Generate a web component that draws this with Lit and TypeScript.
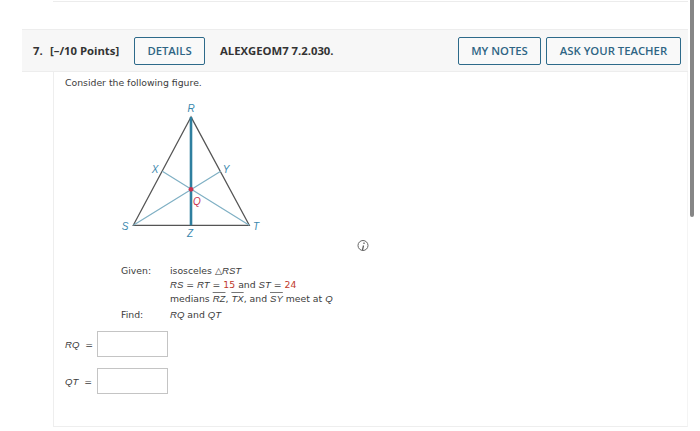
import { LitElement, html, css } from "lit";
import { customElement } from "lit/decorators.js";

@customElement("app-root")
export class AppRoot extends LitElement {
  static styles = css`
    :host {
      display: block;
      position: relative;
      width: 700px;
      height: 431px;
      overflow: hidden;
      background: #fff;
      font-family: "DejaVu Sans", "Open Sans", sans-serif;
      color: #3c3c3c;
    }
    .top-card {
      height: 1px;
      margin: 0 12px 0 53px;
      border-bottom: 1px solid #ececec;
    }
    .head {
      margin: 27px 12px 0 22px;
      height: 41px;
      box-sizing: content-box;
      background: #f7f7f7;
      border-top: 1px solid #ededed;
      border-bottom: 1px solid #ededed;
      display: flex;
      align-items: center;
      padding-left: 11px;
      padding-right: 7px;
      font-family: "Open Sans", sans-serif;
      font-size: 11.3px;
      font-weight: 700;
      color: #333;
    }
    .num { width: 17px; }
    .pts { width: 84px; }
    .ref { margin-left: 15px; flex: 1; }
    .btn {
      box-sizing: border-box;
      height: 28px;
      display: flex;
      align-items: center;
      justify-content: center;
      border: 1.5px solid #2d6a8a;
      border-radius: 2px;
      color: #2f6584;
      font-size: 11.3px;
      font-weight: 600;
      background: #f9f9f9;
    }
    .details { width: 71px; }
    .notes { width: 83px; margin-right: 5px; }
    .ask { width: 135px; }
    .body {
      margin: 0 12px 0 53px;
      height: 355px;
      border-left: 1px solid #eeeeee;
      border-right: 1px solid #f4f4f4;
      border-bottom: 1px solid #eeeeee;
      box-sizing: border-box;
      font-size: 9.3px;
      padding-left: 11px;
    }
    .intro { margin: 0; padding-top: 4px; line-height: 13px; }
    svg.fig { display: block; margin: 7px 0 0 45px; }
    svg.fig text {
      font-family: "Liberation Sans", sans-serif;
      font-size: 10px;
      font-style: italic;
    }
    .lab { fill: #3a87ad; }
    .qlab { fill: #c8334f; }
    .given {
      display: grid;
      grid-template-columns: 49px auto;
      justify-content: start;
      margin: 8px 0 0 56px;
      line-height: 14px;
    }
    .find { margin-top: 2px; }
    .red { color: #c0392b; }
    .ov { text-decoration: overline; text-decoration-color: #777; text-decoration-thickness: 1px; }
    i {
      font-family: "Liberation Sans", sans-serif;
      font-size: 9.6px;
      font-style: italic;
    }
    .answers {
      display: flex;
      flex-direction: column;
      gap: 11px;
      margin-top: 9px;
    }
    .row { display: flex; align-items: center; }
    .row label { width: 32px; }
    .box {
      box-sizing: border-box;
      width: 71px;
      height: 26px;
      border: 1px solid #c4c4c4;
      background: #fff;
    }
    .scroll {
      position: absolute;
      left: 690px;
      top: 0;
      width: 4px;
      height: 217px;
      background: #868686;
      border-radius: 0 0 2px 2px;
    }
  `;

  render() {
    return html`
      <div class="top-card"></div>
      <div class="head">
        <span class="num">7.</span>
        <span class="pts">[–/10 Points]</span>
        <span class="btn details">DETAILS</span>
        <span class="ref">ALEXGEOM7 7.2.030.</span>
        <span class="btn notes">MY NOTES</span>
        <span class="btn ask">ASK YOUR TEACHER</span>
      </div>
      <div class="body">
        <p class="intro">Consider the following figure.</p>
        <svg class="fig" width="270" height="160" viewBox="110 95 270 160">
          <path d="M191 116 L133.3 224.3 H249.3 Z" fill="none" stroke="#555" stroke-width="1.3" />
          <path d="M133.3 224.3 L220.7 170.3 M249.3 224.3 L162.3 170.3" fill="none" stroke="#7fb0c4" stroke-width="1.2" />
          <path d="M191 116 V224.3" stroke="#2f7f9f" stroke-width="2.6" />
          <circle cx="191" cy="188.3" r="2.4" fill="#c8334f" />
          <text class="lab" x="191" y="111" text-anchor="middle">R</text>
          <text class="lab" x="155" y="172" text-anchor="middle">X</text>
          <text class="lab" x="226" y="172" text-anchor="middle">Y</text>
          <text class="qlab" x="197" y="204" text-anchor="middle">Q</text>
          <text class="lab" x="125" y="229" text-anchor="middle">S</text>
          <text class="lab" x="256" y="229" text-anchor="middle">T</text>
          <text class="lab" x="190" y="236" text-anchor="middle">Z</text>
          <circle cx="363" cy="244.5" r="5" fill="none" stroke="#666" stroke-width="1" />
          <path d="M364 241.5 V243 M363.5 244.5 L362.5 249" stroke="#555" stroke-width="1.2" fill="none" />
        </svg>
        <div class="given">
          <span>Given:</span>
          <span>isosceles △<i>RST</i></span>
          <span></span>
          <span><i>RS</i> = <i>RT</i> = <span class="red">15</span> and <i>ST</i> = <span class="red">24</span></span>
          <span></span>
          <span>medians <i class="ov">RZ</i>, <i class="ov">TX</i>, and <i class="ov">SY</i> meet at <i>Q</i></span>
          <span class="find">Find:</span>
          <span class="find"><i>RQ</i> and <i>QT</i></span>
        </div>
        <div class="answers">
          <div class="row"><label><i>RQ</i> &nbsp;=</label><div class="box"></div></div>
          <div class="row"><label><i>QT</i> &nbsp;=</label><div class="box"></div></div>
        </div>
      </div>
      <div class="scroll"></div>
    `;
  }
}
